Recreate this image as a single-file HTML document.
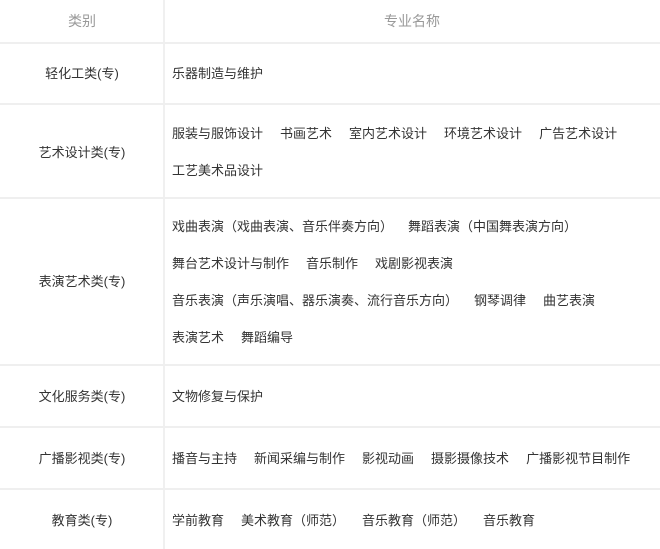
<!DOCTYPE html>
<html><head><meta charset="utf-8"><style>
*{margin:0;padding:0;box-sizing:border-box}
body{width:660px;height:549px;background:#fff;position:relative;overflow:hidden;font-family:"Liberation Sans","Noto Sans CJK SC",sans-serif;font-size:13px;color:#333}
.h{position:absolute;left:0;width:660px;height:2px;background:#efefef}
.v{position:absolute;left:163px;top:0;width:2px;height:549px;background:#f0f0f0}
.c{position:absolute;left:0;width:164px;text-align:center;line-height:16px}
.l{position:absolute;left:172px;line-height:16px;white-space:nowrap}
.l span{margin-right:17px}
.hd{color:#999;font-size:14px}
</style></head><body>
<div class="v"></div>
<div class="h" style="top:42px"></div>
<div class="h" style="top:103px"></div>
<div class="h" style="top:197px"></div>
<div class="h" style="top:364px"></div>
<div class="h" style="top:426px"></div>
<div class="h" style="top:488px"></div>
<div class="c hd" style="top:13px">类别</div>
<div class="c hd" style="top:13px;left:164px;width:496px">专业名称</div>
<div class="c" style="top:66px">轻化工类(专)</div>
<div class="l" style="top:66px"><span>乐器制造与维护</span></div>
<div class="c" style="top:145px">艺术设计类(专)</div>
<div class="l" style="top:126px"><span>服装与服饰设计</span><span>书画艺术</span><span>室内艺术设计</span><span>环境艺术设计</span><span>广告艺术设计</span></div>
<div class="l" style="top:163px"><span>工艺美术品设计</span></div>
<div class="c" style="top:274px">表演艺术类(专)</div>
<div class="l" style="top:219px"><span style="margin-right:15px">戏曲表演（戏曲表演、音乐伴奏方向）</span><span>舞蹈表演（中国舞表演方向）</span></div>
<div class="l" style="top:256px"><span>舞台艺术设计与制作</span><span>音乐制作</span><span>戏剧影视表演</span></div>
<div class="l" style="top:293px"><span style="margin-right:16px">音乐表演（声乐演唱、器乐演奏、流行音乐方向）</span><span>钢琴调律</span><span>曲艺表演</span></div>
<div class="l" style="top:330px"><span>表演艺术</span><span>舞蹈编导</span></div>
<div class="c" style="top:389px">文化服务类(专)</div>
<div class="l" style="top:389px"><span>文物修复与保护</span></div>
<div class="c" style="top:451px">广播影视类(专)</div>
<div class="l" style="top:451px"><span>播音与主持</span><span>新闻采编与制作</span><span>影视动画</span><span>摄影摄像技术</span><span>广播影视节目制作</span></div>
<div class="c" style="top:513px">教育类(专)</div>
<div class="l" style="top:513px"><span>学前教育</span><span>美术教育（师范）</span><span>音乐教育（师范）</span><span>音乐教育</span></div>
</body></html>
